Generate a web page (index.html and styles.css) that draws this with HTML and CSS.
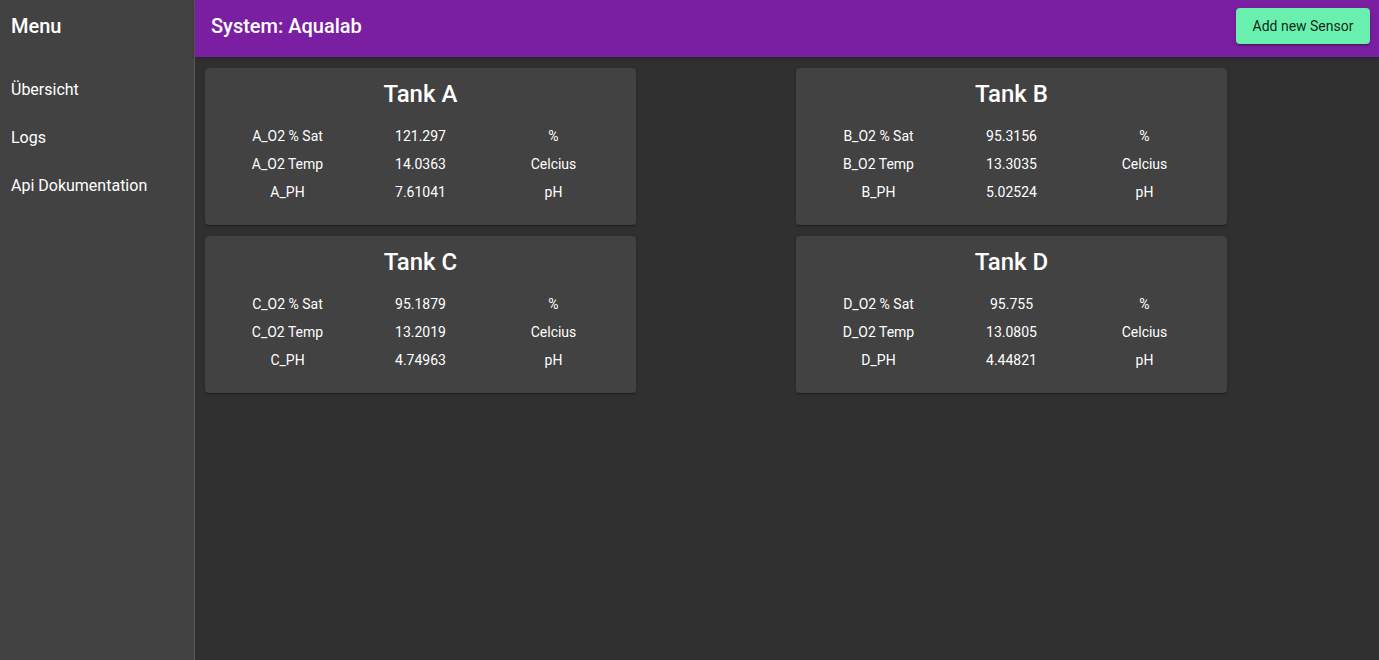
FILE: index.html
```html
<!DOCTYPE html>
<html lang="de">
<head>
<meta charset="utf-8">
<title>Aqualab</title>
<link rel="stylesheet" href="styles.css">
</head>
<body>
<div class="app">
  <aside class="sidebar">
    <div class="menu-title">Menu</div>
    <nav class="nav">
      <a class="nav-item">Übersicht</a>
      <a class="nav-item">Logs</a>
      <a class="nav-item">Api Dokumentation</a>
    </nav>
  </aside>
  <main class="main">
    <header class="topbar">
      <div class="system-title">System: Aqualab</div>
      <button class="add-btn">Add new Sensor</button>
    </header>
    <section class="cards">
      <div class="card">
        <h2 class="card-title">Tank A</h2>
        <div class="table">
          <span>A_O2 % Sat</span><span>121.297</span><span>%</span>
          <span>A_O2 Temp</span><span>14.0363</span><span>Celcius</span>
          <span>A_PH</span><span>7.61041</span><span>pH</span>
        </div>
      </div>
      <div class="card">
        <h2 class="card-title">Tank B</h2>
        <div class="table">
          <span>B_O2 % Sat</span><span>95.3156</span><span>%</span>
          <span>B_O2 Temp</span><span>13.3035</span><span>Celcius</span>
          <span>B_PH</span><span>5.02524</span><span>pH</span>
        </div>
      </div>
      <div class="card">
        <h2 class="card-title">Tank C</h2>
        <div class="table">
          <span>C_O2 % Sat</span><span>95.1879</span><span>%</span>
          <span>C_O2 Temp</span><span>13.2019</span><span>Celcius</span>
          <span>C_PH</span><span>4.74963</span><span>pH</span>
        </div>
      </div>
      <div class="card">
        <h2 class="card-title">Tank D</h2>
        <div class="table">
          <span>D_O2 % Sat</span><span>95.755</span><span>%</span>
          <span>D_O2 Temp</span><span>13.0805</span><span>Celcius</span>
          <span>D_PH</span><span>4.44821</span><span>pH</span>
        </div>
      </div>
    </section>
  </main>
</div>
</body>
</html>
```

FILE: styles.css
```css
* { box-sizing: border-box; }
html, body {
  margin: 0;
  padding: 0;
  height: 100%;
}
body {
  font-family: Roboto, "Liberation Sans", sans-serif;
  color: #fff;
  background: #303030;
}
.app {
  display: flex;
  height: 660px;
}
.sidebar {
  width: 195px;
  flex: 0 0 195px;
  background: #424242;
  border-right: 1px solid #5a5a5a;
}
.menu-title {
  height: 57px;
  display: flex;
  align-items: center;
  padding-left: 11px;
  font-size: 20px;
  font-weight: 500;
  padding-bottom: 6px;
}
.nav {
  display: flex;
  flex-direction: column;
  padding-top: 8px;
}
.nav-item {
  height: 48px;
  display: flex;
  align-items: center;
  padding-left: 11px;
  font-size: 16px;
  color: #fff;
}
.main {
  flex: 1;
  display: flex;
  flex-direction: column;
}
.topbar {
  height: 57px;
  background: #7b1fa2;
  display: flex;
  align-items: center;
  justify-content: space-between;
  padding: 0 9px 0 16px;
  box-shadow: 0 2px 4px rgba(0,0,0,0.2);
}
.system-title {
  font-size: 20px;
  font-weight: 500;
  padding-bottom: 5px;
}
.add-btn {
  font-family: Roboto, "Liberation Sans", sans-serif;
  font-size: 14px;
  color: rgba(0,0,0,0.87);
  background: #69f0ae;
  border: none;
  border-radius: 4px;
  height: 36px;
  width: 134px;
  padding: 0;
  margin-bottom: 6px;
  box-shadow: 0 3px 1px -2px rgba(0,0,0,.2), 0 2px 2px 0 rgba(0,0,0,.14), 0 1px 5px 0 rgba(0,0,0,.12);
}
.cards {
  display: grid;
  grid-template-columns: 431px 431px;
  column-gap: 160px;
  row-gap: 11px;
  padding: 11px 0 0 10px;
}
.card {
  background: #424242;
  border-radius: 4px;
  height: 157px;
  padding: 12px 16px 0;
  box-shadow: 0 2px 1px -1px rgba(0,0,0,.2), 0 1px 1px 0 rgba(0,0,0,.14), 0 1px 3px 0 rgba(0,0,0,.12);
}
.card-title {
  margin: 0;
  text-align: center;
  font-size: 24px;
  font-weight: 500;
  line-height: 28px;
}
.table {
  margin-top: 14px;
  display: grid;
  grid-template-columns: 1fr 1fr 1fr;
  grid-auto-rows: 28px;
  font-size: 14px;
}
.table span {
  display: flex;
  align-items: center;
  justify-content: center;
}
```
